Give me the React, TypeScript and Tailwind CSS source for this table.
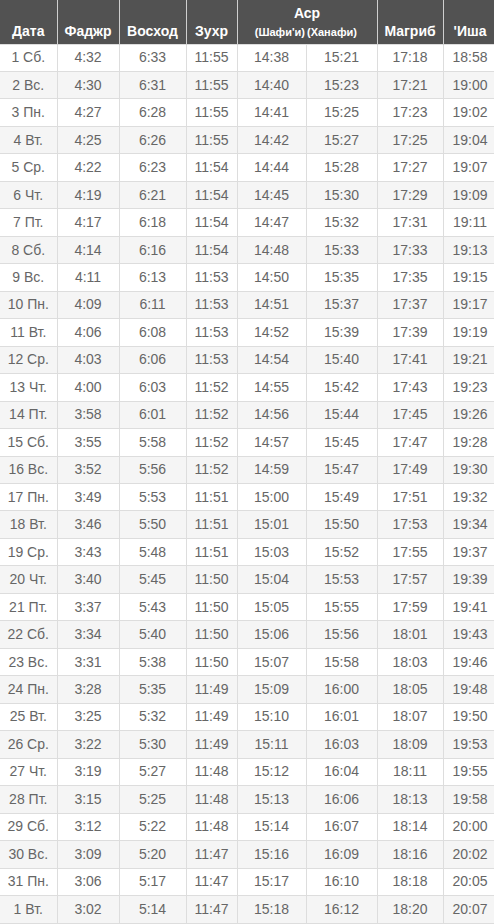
import React from "react";

const rows: string[][] = [
  ["1 Сб.", "4:32", "6:33", "11:55", "14:38", "15:21", "17:18", "18:58"],
  ["2 Вс.", "4:30", "6:31", "11:55", "14:40", "15:23", "17:21", "19:00"],
  ["3 Пн.", "4:27", "6:28", "11:55", "14:41", "15:25", "17:23", "19:02"],
  ["4 Вт.", "4:25", "6:26", "11:55", "14:42", "15:27", "17:25", "19:04"],
  ["5 Ср.", "4:22", "6:23", "11:54", "14:44", "15:28", "17:27", "19:07"],
  ["6 Чт.", "4:19", "6:21", "11:54", "14:45", "15:30", "17:29", "19:09"],
  ["7 Пт.", "4:17", "6:18", "11:54", "14:47", "15:32", "17:31", "19:11"],
  ["8 Сб.", "4:14", "6:16", "11:54", "14:48", "15:33", "17:33", "19:13"],
  ["9 Вс.", "4:11", "6:13", "11:53", "14:50", "15:35", "17:35", "19:15"],
  ["10 Пн.", "4:09", "6:11", "11:53", "14:51", "15:37", "17:37", "19:17"],
  ["11 Вт.", "4:06", "6:08", "11:53", "14:52", "15:39", "17:39", "19:19"],
  ["12 Ср.", "4:03", "6:06", "11:53", "14:54", "15:40", "17:41", "19:21"],
  ["13 Чт.", "4:00", "6:03", "11:52", "14:55", "15:42", "17:43", "19:23"],
  ["14 Пт.", "3:58", "6:01", "11:52", "14:56", "15:44", "17:45", "19:26"],
  ["15 Сб.", "3:55", "5:58", "11:52", "14:57", "15:45", "17:47", "19:28"],
  ["16 Вс.", "3:52", "5:56", "11:52", "14:59", "15:47", "17:49", "19:30"],
  ["17 Пн.", "3:49", "5:53", "11:51", "15:00", "15:49", "17:51", "19:32"],
  ["18 Вт.", "3:46", "5:50", "11:51", "15:01", "15:50", "17:53", "19:34"],
  ["19 Ср.", "3:43", "5:48", "11:51", "15:03", "15:52", "17:55", "19:37"],
  ["20 Чт.", "3:40", "5:45", "11:50", "15:04", "15:53", "17:57", "19:39"],
  ["21 Пт.", "3:37", "5:43", "11:50", "15:05", "15:55", "17:59", "19:41"],
  ["22 Сб.", "3:34", "5:40", "11:50", "15:06", "15:56", "18:01", "19:43"],
  ["23 Вс.", "3:31", "5:38", "11:50", "15:07", "15:58", "18:03", "19:46"],
  ["24 Пн.", "3:28", "5:35", "11:49", "15:09", "16:00", "18:05", "19:48"],
  ["25 Вт.", "3:25", "5:32", "11:49", "15:10", "16:01", "18:07", "19:50"],
  ["26 Ср.", "3:22", "5:30", "11:49", "15:11", "16:03", "18:09", "19:53"],
  ["27 Чт.", "3:19", "5:27", "11:48", "15:12", "16:04", "18:11", "19:55"],
  ["28 Пт.", "3:15", "5:25", "11:48", "15:13", "16:06", "18:13", "19:58"],
  ["29 Сб.", "3:12", "5:22", "11:48", "15:14", "16:07", "18:14", "20:00"],
  ["30 Вс.", "3:09", "5:20", "11:47", "15:16", "16:09", "18:16", "20:02"],
  ["31 Пн.", "3:06", "5:17", "11:47", "15:17", "16:10", "18:18", "20:05"],
  ["1 Вт.", "3:02", "5:14", "11:47", "15:18", "16:12", "18:20", "20:07"],
];

const th = "bg-[#525252] text-white font-bold text-[14px] border-x border-[#cfcfcf] first:border-l-0 align-bottom pb-[2px]";

export default function App() {
  return (
    <div className="w-[494px] overflow-hidden bg-white font-['Liberation_Sans',Arial,sans-serif]">
      <table className="table-fixed border-collapse w-[497px] text-center">
        <colgroup>
          <col className="w-[57px]" />
          <col className="w-[62px]" />
          <col className="w-[67px]" />
          <col className="w-[51px]" />
          <col className="w-[69px]" />
          <col className="w-[71px]" />
          <col className="w-[66px]" />
          <col className="w-[54px]" />
        </colgroup>
        <thead>
          <tr className="h-[21px]">
            <th rowSpan={2} className={th}>Дата</th>
            <th rowSpan={2} className={th}>Фаджр</th>
            <th rowSpan={2} className={th}>Восход</th>
            <th rowSpan={2} className={th}>Зухр</th>
            <th colSpan={2} className="bg-[#525252] text-white font-bold text-[14px] border-x border-[#cfcfcf] align-middle pt-[3px]">Аср</th>
            <th rowSpan={2} className={th}>Магриб</th>
            <th rowSpan={2} className={th}>'Иша</th>
          </tr>
          <tr className="h-[20px]">
            <th className="bg-[#525252] text-white font-bold text-[11px] border-l border-[#cfcfcf] align-bottom pb-[3px] pl-[8px] text-right pr-[1px]">(Шафи'и)</th>
            <th className="bg-[#525252] text-white font-bold text-[11px] border-r border-[#cfcfcf] align-bottom pb-[3px] text-left pl-[1px]">(Ханафи)</th>
          </tr>
        </thead>
        <tbody>
          {rows.map((r, i) => (
            <tr key={i} className={i % 2 === 1 ? "bg-[#f5f5f5]" : "bg-white"}>
              {r.map((c, j) => (
                <td key={j} className="h-[27.47px] p-0 border border-[#dddddd] first:border-l-0 text-[14px] text-[#666666]">
                  {c}
                </td>
              ))}
            </tr>
          ))}
        </tbody>
      </table>
    </div>
  );
}
